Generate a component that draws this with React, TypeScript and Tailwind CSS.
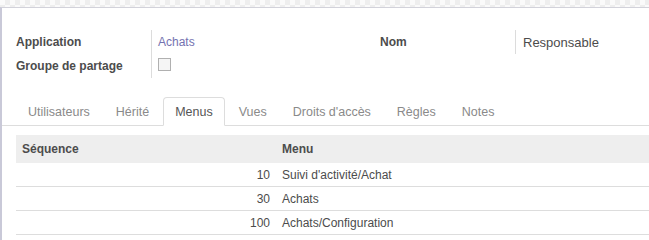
import React from "react";

const tabs = ["Utilisateurs", "Hérité", "Menus", "Vues", "Droits d'accès", "Règles", "Notes"];

const rows = [
  { seq: 10, menu: "Suivi d'activité/Achat" },
  { seq: 30, menu: "Achats" },
  { seq: 100, menu: "Achats/Configuration" },
];

export default function App() {
  return (
    <div className="w-[649px] h-[240px] overflow-hidden bg-white flex flex-col font-['Liberation_Sans',Arial,sans-serif] text-[12px] text-[#4c4c4c]">
      {/* checkered strip above the sheet */}
      <div className="h-[7px] shrink-0 bg-[image:repeating-conic-gradient(#eeeeee_0_25%,#fafafa_0_50%)] bg-size-[10px_10px]" />

      <div className="flex-1 border-l-2 border-t border-l-[#c9c9d8] border-t-[#d2d2da] bg-white">
        {/* form fields */}
        <div className="flex pt-[22px] pl-[14px]">
          <div className="flex w-[364px]">
            <div className="w-[135px] font-bold">
              <div className="h-[24px] leading-[24px]">Application</div>
              <div className="h-[24px] leading-[24px]">Groupe de partage</div>
            </div>
            <div className="border-l border-[#dcdcdc] pl-[6px]">
              <div className="h-[24px] leading-[24px] text-[#7472b0]">Achats</div>
              <div className="h-[24px] pt-[4px]">
                <div className="w-[13px] h-[13px] border border-[#b0b0b0] bg-[#f5f5f5]" />
              </div>
            </div>
          </div>
          <div className="flex items-start">
            <div className="w-[135px] h-[24px] leading-[24px] font-bold">Nom</div>
            <div className="h-[24px] leading-[26px] border-l border-[#dcdcdc] pl-[7px] text-[13px]">
              Responsable
            </div>
          </div>
        </div>

        {/* notebook tabs */}
        <ul className="mt-[19px] flex pl-[14px] border-b border-[#dddddd] text-[12.5px]">
          {tabs.map((t) => (
            <li
              key={t}
              className={
                t === "Menus"
                  ? "h-[29px] -mb-px mr-[2px] px-[11px] leading-[28px] border border-[#dddddd] border-b-white rounded-t-[4px] bg-white text-[#555555]"
                  : "h-[29px] -mb-px mr-[2px] px-[11px] leading-[28px] border border-transparent text-[#8a8a8a]"
              }
            >
              {t}
            </li>
          ))}
        </ul>

        {/* menu list */}
        <div className="mt-[9px] ml-[14px]">
          <div className="grid grid-cols-[260px_1fr] h-[28px] items-center bg-[#eeeeee] font-bold">
            <div className="pl-[6px]">Séquence</div>
            <div className="pl-[6px]">Menu</div>
          </div>
          {rows.map((r) => (
            <div
              key={r.seq}
              className="grid grid-cols-[260px_1fr] h-[24px] items-center border-b border-[#dddddd]"
            >
              <div className="text-right pr-[6px]">{r.seq}</div>
              <div className="pl-[6px]">{r.menu}</div>
            </div>
          ))}
        </div>
      </div>
    </div>
  );
}
